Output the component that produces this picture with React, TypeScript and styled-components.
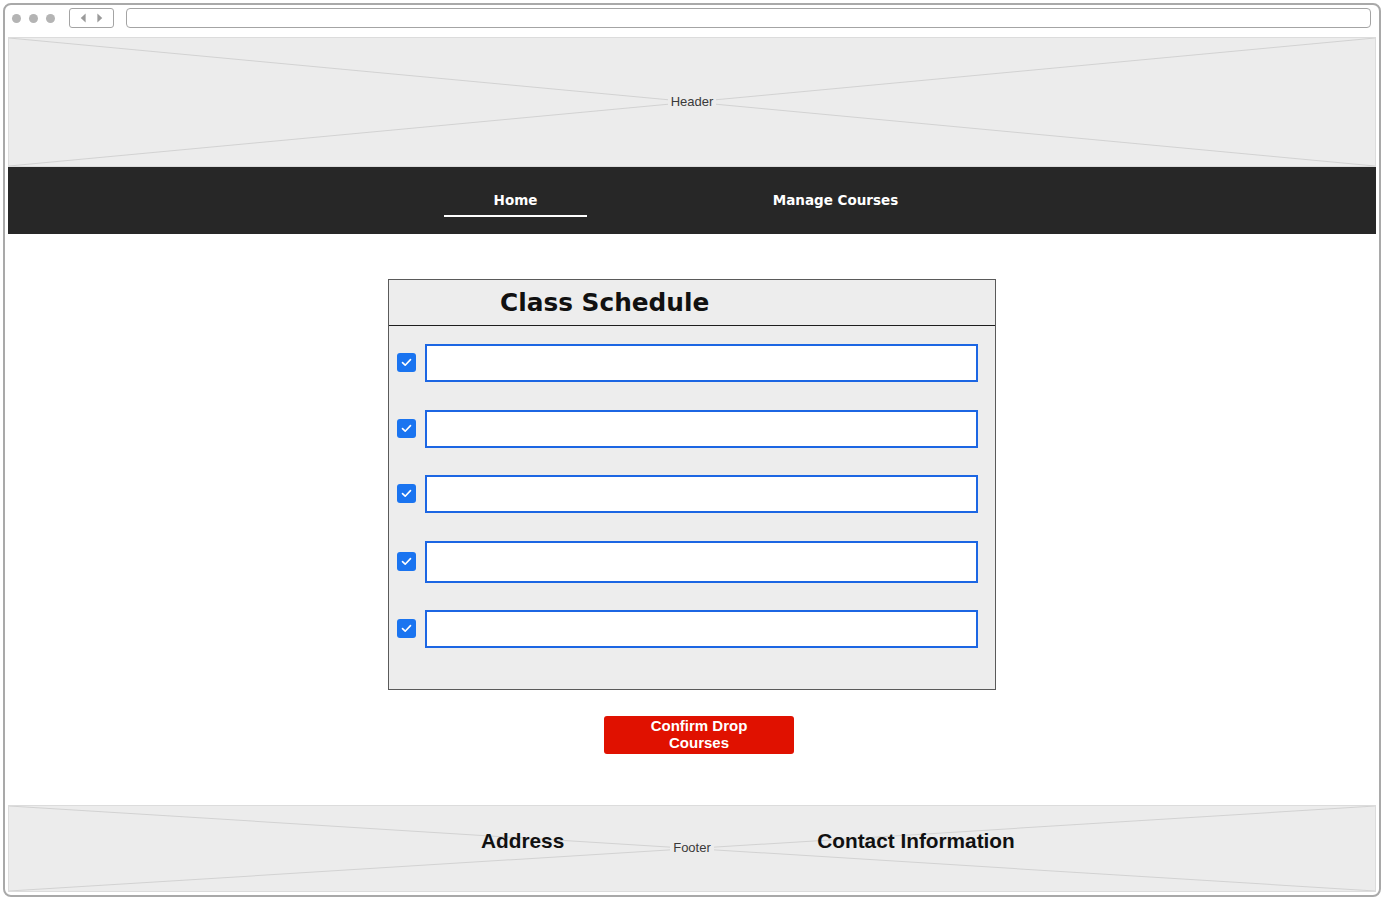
import React from 'react';
import styled, { createGlobalStyle } from 'styled-components';

const GlobalStyle = createGlobalStyle`
  * { box-sizing: border-box; }
  body {
    margin: 0;
    background: #ffffff;
    font-family: "Liberation Sans", Arial, sans-serif;
  }
`;

const courses = [
  { id: 1, tall: false },
  { id: 2, tall: false },
  { id: 3, tall: false },
  { id: 4, tall: true },
  { id: 5, tall: false },
];

// the grey "X" drawn over wireframe placeholders
const Cross: React.FC = () => (
  <CrossSvg viewBox="0 0 100 100" preserveAspectRatio="none">
    <line x1="0" y1="0" x2="100" y2="100" stroke="#d2d2d2" strokeWidth="1" vectorEffect="non-scaling-stroke" />
    <line x1="100" y1="0" x2="0" y2="100" stroke="#d2d2d2" strokeWidth="1" vectorEffect="non-scaling-stroke" />
  </CrossSvg>
);

const Check: React.FC = () => (
  <CheckBox>
    <svg width="11" height="9" viewBox="0 0 11 9">
      <path d="M1.5 4.6 L4.2 7.2 L9.5 1.6" fill="none" stroke="#fff" strokeWidth="1.6" strokeLinecap="round" strokeLinejoin="round" />
    </svg>
  </CheckBox>
);

const App: React.FC = () => {
  return (
    <>
      <GlobalStyle />
      <Window>
        <TitleBar>
          <Dots>
            <Dot />
            <Dot />
            <Dot />
          </Dots>
          <NavButtons>
            <svg width="44" height="18" viewBox="0 0 44 18">
              <path d="M16 4.5 L11 9 L16 13.5 Z" fill="#9a9a9a" />
              <path d="M28 4.5 L33 9 L28 13.5 Z" fill="#9a9a9a" />
            </svg>
          </NavButtons>
          <UrlBar />
        </TitleBar>

        <Content>
          <Placeholder $height={130}>
            <Cross />
            <PlaceholderLabel>Header</PlaceholderLabel>
          </Placeholder>

          <NavBar>
            <NavItem $active>Home</NavItem>
            <NavItem>Manage Courses</NavItem>
          </NavBar>

          <Main>
            <Card>
              <CardTitle>Class Schedule</CardTitle>
              <CourseList>
                {courses.map((c) => (
                  <CourseRow key={c.id}>
                    <Check />
                    <CourseInput $tall={c.tall} />
                  </CourseRow>
                ))}
              </CourseList>
            </Card>
            <DropButton>
              Confirm Drop
              <br />
              Courses
            </DropButton>
          </Main>

          <Footer>
            <Cross />
            <PlaceholderLabel>Footer</PlaceholderLabel>
            <FooterColumns>
              <FooterHeading>Address</FooterHeading>
              <FooterHeading>Contact Information</FooterHeading>
            </FooterColumns>
          </Footer>
        </Content>
      </Window>
    </>
  );
};

export default App;

const Window = styled.div`
  margin: 3px 0 0 3px;
  width: 1378px;
  height: 894px;
  border: 2px solid #a9a9a9;
  border-radius: 8px;
  background: #ffffff;
  display: flex;
  flex-direction: column;
  overflow: hidden;
`;

const TitleBar = styled.div`
  height: 32px;
  padding: 3px 8px 0 7px;
  display: flex;
  align-items: flex-start;
`;

const Dots = styled.div`
  height: 20px;
  display: flex;
  align-items: center;
  gap: 8px;
`;

const Dot = styled.span`
  width: 9px;
  height: 9px;
  border-radius: 50%;
  background: #b4b4b4;
`;

const NavButtons = styled.div`
  margin-left: 14px;
  width: 45px;
  height: 20px;
  border: 1.5px solid #a4a4a4;
  border-radius: 3px;
  display: flex;
  align-items: center;
  justify-content: center;
`;

const UrlBar = styled.div`
  margin-left: 12px;
  flex: 1;
  height: 20px;
  border: 1.5px solid #a4a4a4;
  border-radius: 4px;
`;

const Content = styled.div`
  flex: 1;
  padding: 0 3px 3px 3px;
  display: flex;
  flex-direction: column;
`;

const Placeholder = styled.div<{ $height: number }>`
  position: relative;
  height: ${(p) => p.$height}px;
  padding-bottom: 2px;
  background: #ececec;
  border: 1px solid #dcdcdc;
  display: flex;
  align-items: center;
  justify-content: center;
`;

const CrossSvg = styled.svg`
  position: absolute;
  inset: 0;
  width: 100%;
  height: 100%;
`;

const PlaceholderLabel = styled.span`
  position: relative;
  z-index: 1;
  background: #ececec;
  padding: 0 3px;
  font-family: "Liberation Sans", Arial, sans-serif;
  font-size: 13px;
  color: #3a3a3a;
`;

const NavBar = styled.nav`
  height: 67px;
  background: #272727;
  display: flex;
  align-items: stretch;
  padding-left: 436px;
  gap: 177px;
`;

const NavItem = styled.a<{ $active?: boolean }>`
  width: 143px;
  display: flex;
  align-items: center;
  justify-content: center;
  padding-bottom: 1px;
  color: #ffffff;
  font-family: "DejaVu Sans", sans-serif;
  font-weight: 700;
  font-size: 13.5px;
  position: relative;

  &::after {
    content: '';
    display: ${(p) => (p.$active ? 'block' : 'none')};
    position: absolute;
    left: 0;
    right: 0;
    bottom: 17px;
    height: 2px;
    background: #ffffff;
  }
`;

const Main = styled.main`
  flex: 1;
  padding-top: 45px;
  display: flex;
  flex-direction: column;
  align-items: center;
`;

const Card = styled.section`
  width: 608px;
  height: 411px;
  background: #ededed;
  border: 1px solid #5a5a5a;
  display: flex;
  flex-direction: column;
`;

const CardTitle = styled.h2`
  margin: 0;
  height: 46px;
  border-bottom: 1px solid #1e1e1e;
  padding-left: 111px;
  display: flex;
  align-items: center;
  font-family: "DejaVu Sans", sans-serif;
  font-weight: 700;
  font-size: 24.8px;
  color: #111111;
`;

const CourseList = styled.div`
  padding: 18px 17px 0 8px;
  display: flex;
  flex-direction: column;
  gap: 27.5px;
`;

const CourseRow = styled.div`
  display: flex;
  align-items: center;
  gap: 9px;
`;

const CheckBox = styled.span`
  width: 19px;
  height: 19px;
  margin-top: -1px;
  border-radius: 3px;
  background: #1a74f0;
  display: flex;
  align-items: center;
  justify-content: center;
`;

const CourseInput = styled.input<{ $tall?: boolean }>`
  flex: 1;
  height: ${(p) => (p.$tall ? 42 : 38)}px;
  border: 2px solid #1c66e3;
  background: #ffffff;
  outline: none;
`;

const DropButton = styled.button`
  margin-top: 26px;
  margin-left: 14px;
  width: 190px;
  height: 38px;
  border: none;
  border-radius: 3px;
  background: #e01100;
  color: #ffffff;
  font-family: "Liberation Sans", Arial, sans-serif;
  font-weight: 700;
  font-size: 15px;
  line-height: 17px;
  padding: 0 0 2px 0;
`;

const Footer = styled.footer`
  position: relative;
  height: 87px;
  padding-bottom: 2px;
  background: #ececec;
  border: 1px solid #dcdcdc;
  display: flex;
  align-items: center;
  justify-content: center;
`;

const FooterColumns = styled.div`
  position: absolute;
  inset: 0;
  padding: 23px 0 0 472px;
  display: flex;
  align-items: flex-start;
  gap: 253px;
`;

const FooterHeading = styled.h3`
  margin: 0;
  font-family: "Liberation Sans", Arial, sans-serif;
  font-weight: 700;
  font-size: 20.8px;
  line-height: 23px;
  color: #111111;
`;
